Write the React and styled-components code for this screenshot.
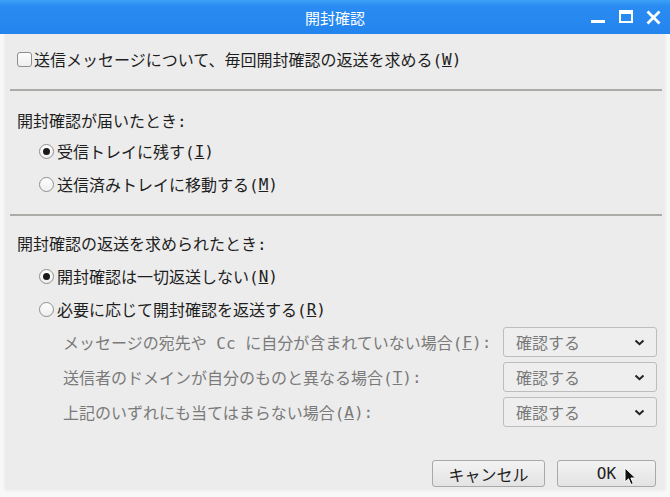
import React from 'react';
import styled, { createGlobalStyle } from 'styled-components';

const GlobalStyle = createGlobalStyle`
  html, body {
    margin: 0;
    padding: 0;
    background: #f8f8f8;
  }
  body {
    font-family: "DejaVu Sans Mono", "Noto Sans CJK JP", monospace;
    font-size: 16px;
    color: #1e1e1e;
  }
`;

const Window = styled.div`
  width: 670px;
  height: 497px;
  display: flex;
  flex-direction: column;
  background: #f8f8f8;
  position: relative;
  overflow: hidden;
`;

const TitleBar = styled.div`
  height: 34px;
  flex: none;
  display: flex;
  align-items: center;
  justify-content: center;
  position: relative;
  background: linear-gradient(#3da0f6 0px, #2a8cf2 6px, #2384ee 100%);
  color: #fff;
  font-size: 15px;
`;

const Controls = styled.div`
  position: absolute;
  right: 9px;
  top: 0;
  height: 34px;
  display: flex;
  align-items: center;
  gap: 13px;
`;

const Panel = styled.div`
  margin: 0 5px;
  height: 456px;
  background: #ececec;
  box-shadow: 0 0 3px rgba(0, 0, 0, 0.08);
  display: flex;
  flex-direction: column;
`;

const Row = styled.label`
  height: 24px;
  display: flex;
  align-items: center;
  margin-top: ${p => p.$mt || 0}px;
  padding-left: ${p => p.$indent || 0}px;
  white-space: pre;
`;

const Heading = styled.div`
  height: 24px;
  display: flex;
  align-items: center;
  margin-top: ${p => p.$mt || 0}px;
  padding-left: 12px;
  white-space: pre;
`;

const Separator = styled.div`
  height: 2px;
  background: #abaca8;
  margin: ${p => p.$mt || 0}px 3px 0 5px;
`;

const CheckBox = styled.span`
  width: 13px;
  height: 13px;
  border: 1px solid #8d8d8d;
  border-radius: 3px;
  background: linear-gradient(#fdfdfd, #efefef);
  margin-right: 2px;
  flex: none;
`;

const Radio = styled.span`
  width: 13px;
  height: 13px;
  border: 1px solid #8f8f8f;
  border-radius: 50%;
  background: linear-gradient(#fdfdfd, #efefef);
  margin-right: 3px;
  flex: none;
  display: flex;
  align-items: center;
  justify-content: center;
  &::after {
    content: '';
    width: 7px;
    height: 7px;
    border-radius: 50%;
    background: ${p => (p.$checked ? '#1a1a1a' : 'transparent')};
  }
`;

const Options = styled.div`
  display: grid;
  grid-template-columns: 1fr 154px;
  row-gap: 5px;
  margin-top: 6px;
  padding: 0 8px 0 58px;
`;

const OptionLabel = styled.div`
  height: 30px;
  display: flex;
  align-items: center;
  color: #7a7a7a;
  white-space: pre;
`;

const Select = styled.div`
  height: 28px;
  border: 1px solid #bdbdbd;
  border-radius: 3px;
  background: #eeeeee;
  display: flex;
  align-items: center;
  justify-content: space-between;
  padding: 0 11px 0 12px;
  color: #7a7a7a;
`;

const Footer = styled.div`
  margin-top: 33px;
  display: flex;
  justify-content: flex-end;
  gap: 12px;
  padding-right: 9px;
`;

const Button = styled.div`
  width: ${p => p.$w}px;
  height: 25px;
  border: 1px solid #a9a9a9;
  border-radius: 3px;
  background: linear-gradient(#f3f3f3, #e3e3e3);
  display: flex;
  align-items: center;
  justify-content: center;
  color: #1e1e1e;
  box-sizing: content-box;
`;

const Cursor = styled.svg`
  position: absolute;
  left: 624px;
  top: 467px;
`;

const Chevron = () => (
  <svg width="11" height="7" viewBox="0 0 11 7">
    <path d="M1.5 1.5 L5.5 5.2 L9.5 1.5" fill="none" stroke="#222" strokeWidth="2" />
  </svg>
);

const rows = [
  { text: <>メッセージの宛先や Cc に自分が含まれていない場合(<u>F</u>):</> },
  { text: <>送信者のドメインが自分のものと異なる場合(<u>T</u>):</> },
  { text: <>上記のいずれにも当てはまらない場合(<u>A</u>):</> },
];

export default function App() {
  return (
    <>
      <GlobalStyle />
      <Window>
        <TitleBar>
          開封確認
          <Controls>
            <svg width="15" height="14" viewBox="0 0 15 14">
              <rect x="0" y="10" width="14" height="3" fill="#fff" />
            </svg>
            <svg width="14" height="14" viewBox="0 0 14 14">
              <rect x="1" y="1" width="12" height="11" fill="none" stroke="#fff" strokeWidth="2" />
              <rect x="1" y="1" width="12" height="3" fill="#fff" />
            </svg>
            <svg width="15" height="15" viewBox="0 0 15 15">
              <path d="M1.5 1.5 L13.5 13.5 M13.5 1.5 L1.5 13.5" stroke="#fff" strokeWidth="2.8" />
            </svg>
          </Controls>
        </TitleBar>
        <Panel>
          <Row $mt={13} $indent={12}>
            <CheckBox />
            送信メッセージについて、毎回開封確認の返送を求める(<u>W</u>)
          </Row>
          <Separator $mt={18} />
          <Heading $mt={17}>開封確認が届いたとき:</Heading>
          <Row $mt={7} $indent={34}>
            <Radio $checked />
            受信トレイに残す(<u>I</u>)
          </Row>
          <Row $mt={9} $indent={34}>
            <Radio />
            送信済みトレイに移動する(<u>M</u>)
          </Row>
          <Separator $mt={18} />
          <Heading $mt={15}>開封確認の返送を求められたとき:</Heading>
          <Row $mt={9} $indent={34}>
            <Radio $checked />
            開封確認は一切返送しない(<u>N</u>)
          </Row>
          <Row $mt={9} $indent={34}>
            <Radio />
            必要に応じて開封確認を返送する(<u>R</u>)
          </Row>
          <Options>
            {rows.map((r, i) => (
              <React.Fragment key={i}>
                <OptionLabel>{r.text}</OptionLabel>
                <Select>
                  確認する
                  <Chevron />
                </Select>
              </React.Fragment>
            ))}
          </Options>
          <Footer>
            <Button $w={111}>キャンセル</Button>
            <Button $w={97}>OK</Button>
          </Footer>
        </Panel>
        <Cursor width="13" height="20" viewBox="0 0 13 20">
          <path d="M1 1 L1 15 L4.5 11.8 L7 17.5 L9.3 16.5 L6.9 11 L11.5 11 Z" fill="#111" stroke="#fff" strokeWidth="1" />
        </Cursor>
      </Window>
    </>
  );
}
